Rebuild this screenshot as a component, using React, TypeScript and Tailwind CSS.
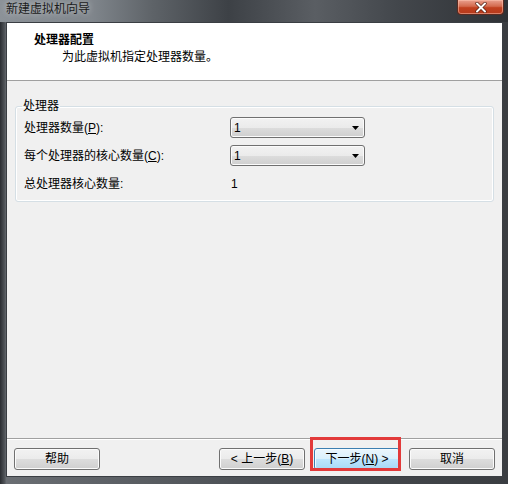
import React from "react";

const btn =
  "w-[86px] h-[22px] flex items-center justify-center rounded-[3px] border border-[#707070] bg-[linear-gradient(#f2f2f2_0%,#ebebeb_50%,#dddddd_50%,#cfcfcf_100%)] shadow-[inset_0_0_0_1px_#fbfbfb] text-[12px] leading-[16px] text-black";

function Combo() {
  return (
    <div className="w-[135px] h-[21px] flex items-center justify-between pl-[3px] pr-[5px] rounded-[3px] border border-[#707070] bg-[linear-gradient(#f2f2f2_0%,#ebebeb_50%,#dddddd_50%,#cfcfcf_100%)] shadow-[inset_0_0_0_1px_#fbfbfb] text-[12px] leading-[16px] text-black">
      <span>1</span>
      <svg width="7" height="4" viewBox="0 0 7 4">
        <path d="M0 0H7L3.5 4Z" fill="#000" />
      </svg>
    </div>
  );
}

export default function App() {
  return (
    <div className="w-[508px] h-[484px] flex flex-col overflow-hidden bg-[linear-gradient(to_right,#2a2d31_0%,#55595e_1%,#6a6e73_1.2%,#4b4f54_50%,#3a3d41_100%)] font-['Liberation_Sans','Noto_Sans_CJK_SC',sans-serif] text-[12px] text-black">
      {/* Title bar */}
      <div className="h-[22px] flex items-start justify-between bg-[linear-gradient(to_right,#8c9298_0%,#80868c_18%,#5e6368_30%,#3d4146_45%,#5a5e63_62%,#43474c_78%,#2f3236_100%)]">
        <div className="pl-[6px] pt-[1px] text-[12px] leading-[16px] text-[#1b1b1b] [text-shadow:0_0_6px_rgba(255,255,255,0.6)]">
          新建虚拟机向导
        </div>
        <div className="mr-[4px] w-[47px] h-[15px] flex items-center justify-center rounded-b-[4px] border border-t-0 border-[#5a2a20] bg-[linear-gradient(#e9a08e_0%,#d36a4e_45%,#c1401f_55%,#b53a1c_100%)] shadow-[inset_0_0_0_1px_rgba(255,200,180,0.5)]">
          <svg width="12" height="11" viewBox="0 0 12 11">
            <path d="M2 1.5L10 9.5M10 1.5L2 9.5" stroke="#4a1b10" strokeWidth="3.2" strokeLinecap="round" />
            <path d="M2 1.5L10 9.5M10 1.5L2 9.5" stroke="#fff" strokeWidth="2" strokeLinecap="round" />
          </svg>
        </div>
      </div>

      {/* Client */}
      <div className="ml-[6px] w-[497px] h-[455px] border border-[#3a3e43] bg-[#f0f0f0] flex flex-col">
        {/* Header */}
        <div className="h-[58px] bg-white border-b border-[#a0a0a0] pl-[27px] pt-[9px] shrink-0">
          <div className="font-bold leading-[16px]">处理器配置</div>
          <div className="pl-[28px] mt-[1px] leading-[16px]">为此虚拟机指定处理器数量。</div>
        </div>

        {/* Body */}
        <div className="flex-1">
          <fieldset className="mt-[18px] mx-[8px] px-[6px] pb-[9px] border border-[#d5dfe5] rounded-[3px] shadow-[inset_0_0_0_1px_#fff]">
            <legend className="px-[1px] leading-[14px]">处理器</legend>
            <div className="mt-[4px] ml-[2px] flex flex-col">
              <div className="flex items-center h-[21px]">
                <div className="w-[206px] leading-[16px]">
                  处理器数量(<span className="underline">P</span>):
                </div>
                <Combo />
              </div>
              <div className="mt-[7px] flex items-center h-[21px]">
                <div className="w-[206px] leading-[16px]">
                  每个处理器的核心数量(<span className="underline">C</span>):
                </div>
                <Combo />
              </div>
              <div className="mt-[10px] flex items-center h-[16px]">
                <div className="w-[207px] leading-[16px]">总处理器核心数量:</div>
                <div className="leading-[16px]">1</div>
              </div>
            </div>
          </fieldset>
        </div>

        {/* Footer */}
        <div className="h-[38px] shrink-0 border-t border-[#a0a0a0] shadow-[inset_0_1px_0_#fff] pt-[9px] pl-[7px] pr-[7px] flex items-start">
          <button className={btn}>帮助</button>
          <div className="flex-1" />
          <button className={btn}>
            &lt; 上一步(<span className="underline">B</span>)
          </button>
          <div className="relative ml-[9px]">
            <button className="w-[86px] h-[22px] flex items-center justify-center rounded-[3px] border border-[#3c7fb1] bg-[linear-gradient(#eaf6fd_0%,#d9f0fc_50%,#bee6fd_50%,#a7d9f5_100%)] shadow-[inset_0_0_0_1px_#f4fbff] text-[12px] leading-[16px] text-black">
              下一步(<span className="underline">N</span>) &gt;
            </button>
            <div className="absolute left-[-4px] right-[-1px] top-[-11px] bottom-[-1px] border-[3px] border-[#e23a3a] pointer-events-none" />
          </div>
          <button className={btn + " ml-[9px]"}>取消</button>
        </div>
      </div>
    </div>
  );
}
